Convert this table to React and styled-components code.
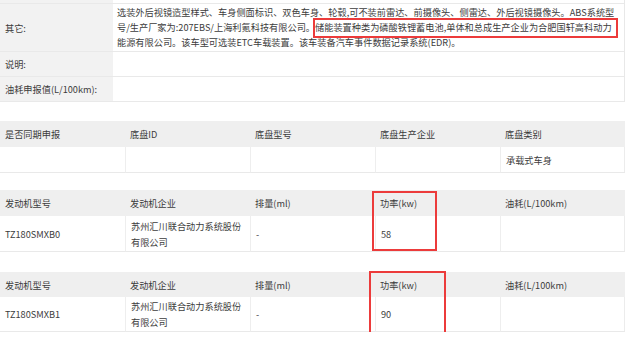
import React from "react";
import styled, { createGlobalStyle } from "styled-components";

const Global = createGlobalStyle`
  html, body { margin: 0; padding: 0; background: #fff; }
  body {
    font-family: "Noto Sans CJK SC", "Microsoft YaHei", sans-serif;
    font-size: 9.2px;
    color: #3c3c3c;
  }
`;

const Page = styled.div`
  width: 625px;
  position: relative;
`;

const InfoTable = styled.div`
  display: flex;
  flex-direction: column;
  border-right: 1px solid #e8e8e8;
`;

const InfoRow = styled.div`
  display: flex;
  height: ${(p) => p.$h}px;
  border-bottom: 1px solid #e9e9e9;
  position: relative;
`;

const Label = styled.div`
  width: 113px;
  flex: none;
  box-sizing: border-box;
  background: #f2f2f2;
  padding-left: 5px;
  display: flex;
  align-items: center;
`;

const Value = styled.div`
  flex: 1;
  padding: 0 6px 0 4px;
  display: flex;
  align-items: center;
  line-height: 15px;
`;

const Tables = styled.div`
  display: flex;
  flex-direction: column;
  position: relative;
`;

const DataTable = styled.div`
  margin-top: ${(p) => p.$mt}px;
  display: grid;
  grid-template-columns: repeat(5, 125px);
  border-right: 1px solid #ececec;
  width: 625px;
  box-sizing: border-box;
`;

const HeadCell = styled.div`
  background: #efefef;
  height: ${(p) => p.$h}px;
  padding-left: 5px;
  display: flex;
  align-items: center;
`;

const BodyCell = styled.div`
  height: ${(p) => p.$h}px;
  padding: 0 4px 0 5px;
  display: flex;
  align-items: center;
  line-height: 16px;
  border-bottom: 1px solid #e9e9e9;
  border-left: ${(p) => (p.$first ? "none" : "1px solid #eeeeee")};
  box-sizing: content-box;
`;

const RedBox = styled.div`
  position: absolute;
  left: ${(p) => p.$x}px;
  top: ${(p) => p.$y}px;
  width: ${(p) => p.$w}px;
  height: ${(p) => p.$hh}px;
  border: 2px solid #ec3b3b;
  box-sizing: border-box;
  pointer-events: none;
`;

function Table({ mt, headH, bodyH, head, body }) {
  return (
    <DataTable $mt={mt}>
      {head.map((h, i) => (
        <HeadCell key={"h" + i} $h={headH}>
          {h}
        </HeadCell>
      ))}
      {body.map((b, i) => (
        <BodyCell key={"b" + i} $h={bodyH} $first={i === 0}>
          {b}
        </BodyCell>
      ))}
    </DataTable>
  );
}

export default function App() {
  return (
    <>
      <Global />
      <Page>
        <InfoTable>
          <InfoRow $h={3}>
            <Label />
            <Value />
          </InfoRow>
          <InfoRow $h={47}>
            <Label>其它:</Label>
            <Value>
              选装外后视镜造型样式、车身侧面标识、双色车身、轮毂,可不装前雷达、前摄像头、侧雷达、外后视镜摄像头。ABS系统型号/生产厂家为:207EBS/上海利氪科技有限公司。储能装置种类为磷酸铁锂蓄电池,单体和总成生产企业为合肥国轩高科动力能源有限公司。该车型可选装ETC车载装置。该车装备汽车事件数据记录系统(EDR)。
            </Value>
            <RedBox $x={313} $y={14} $w={305} $hh={20} />
          </InfoRow>
          <InfoRow $h={24}>
            <Label>说明:</Label>
            <Value />
          </InfoRow>
          <InfoRow $h={24}>
            <Label>油耗申报值(L/100km):</Label>
            <Value />
          </InfoRow>
        </InfoTable>
        <Tables>
          <Table
            mt={19}
            headH={26}
            bodyH={25}
            head={["是否同期申报", "底盘ID", "底盘型号", "底盘生产企业", "底盘类别"]}
            body={["", "", "", "", "承载式车身"]}
          />
          <Table
            mt={17}
            headH={26}
            bodyH={35}
            head={["发动机型号", "发动机企业", "排量(ml)", "功率(kw)", "油耗(L/100km)"]}
            body={["TZ180SMXB0", "苏州汇川联合动力系统股份有限公司", "-", "58", ""]}
          />
          <Table
            mt={20}
            headH={25}
            bodyH={34}
            head={["发动机型号", "发动机企业", "排量(ml)", "功率(kw)", "油耗(L/100km)"]}
            body={["TZ180SMXB1", "苏州汇川联合动力系统股份有限公司", "-", "90", ""]}
          />
          <RedBox $x={372} $y={89} $w={65} $hh={60} />
          <RedBox $x={369} $y={169} $w={77} $hh={64} />
        </Tables>
      </Page>
    </>
  );
}
